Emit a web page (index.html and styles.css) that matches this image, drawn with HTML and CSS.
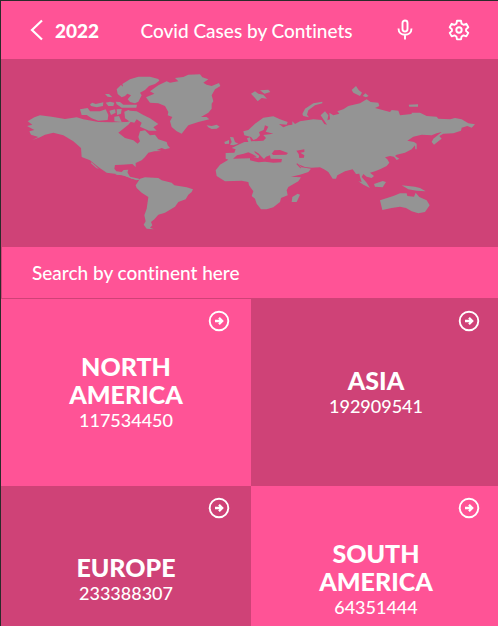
FILE: index.html
```html
<!DOCTYPE html>
<html lang="en">
<head>
<meta charset="utf-8">
<meta name="viewport" content="width=device-width, initial-scale=1">
<title>Covid Cases by Continets</title>
<link rel="stylesheet" href="styles.css">
</head>
<body>
<svg class="symbols" aria-hidden="true">
  <symbol id="arrow" viewBox="0 0 22 22">
    <circle cx="11" cy="11" r="9.3" fill="none" stroke="currentColor" stroke-width="1.9"/>
    <path d="M7 11h6.500M11 7.800l3.200 3.200-3.200 3.200" fill="none" stroke="currentColor" stroke-width="2.300"/>
  </symbol>
</svg>
<div class="app">
  <header class="bar">
    <a class="back" href="#" aria-label="Back">
      <svg width="14" height="22" viewBox="0 0 14 22"><path d="M13 1.500L3 11l10 9.500" fill="none" stroke="currentColor" stroke-width="2.200"/></svg>
      <span>2022</span>
    </a>
    <h1 class="title">Covid Cases by Continets</h1>
    <div class="actions">
      <button type="button" aria-label="Voice">
        <svg width="22" height="22" viewBox="0 0 22 22" fill="none" stroke="currentColor" stroke-width="1.900"><rect x="8.500" y="1.500" width="5" height="11" rx="2.500"/><path d="M4.500 9.500c0 8.400 13 8.400 13 0M11 15.800v4.700"/></svg>
      </button>
      <button type="button" aria-label="Settings">
        <svg width="22" height="22" viewBox="0 0 22 22" fill="none" stroke="currentColor" stroke-width="1.900" stroke-linejoin="round"><path d="M9 1.800h4l.6 2.900 1.900 1.100 2.800-1 2 3.500-2.200 1.900v1.800l2.200 1.900-2 3.500-2.800-1-1.900 1.100-.6 2.900H9l-.6-2.900-1.900-1.100-2.800 1-2-3.500 2.200-1.900v-1.800L1.700 8.300l2-3.500 2.800 1 1.900-1.100z"/><circle cx="11" cy="11" r="2.700"/></svg>
      </button>
    </div>
  </header>
  <main>
    <svg class="map" viewBox="3 177 1491 564" role="img" aria-label="World map">
      <g class="land">
        <g transform="translate(45 186)">
          <path d="M36 192L52 188 38 178 58 166 75 160 110 164 150 171 185 166 205 172 250 180 290 181 335 180 350 176 340 188 325 200 310 212 330 228 355 235 368 245 375 238 370 225 375 208 390 205 405 220 420 218 430 232 455 240 458 250 465 258 450 262 440 258 425 264 440 267 418 268 400 272 390 285 380 295 362 303 362 315 352 306 320 308 300 309 298 320 304 328 320 330 326 324 340 323 335 337 350 350 378 351 365 355 340 345 310 337 275 332 250 315 225 295 200 285 198 258 175 238 145 220 115 212 90 218 75 226 52 234 70 225 48 218 43 208 58 204Z"/>
          <path d="M230 301l22 20-8-3-17-15Z"/>
        </g>
        <g transform="translate(225 210)">
          <path d="M142 42L165 28 190 20 225 20 250 27 253 32 240 42 222 48 210 60 195 68 200 76 190 95 180 100 165 96 158 88 168 76 150 68ZM125 58L138 45 150 55 160 68 150 78 140 82 128 72ZM90 72h12l10 10-14-2ZM92 98l13-3 13 3-3 10h-15ZM45 103l7-5 10 4 23-5-1 11-19 4-17-4ZM122 95l13 1 10 8h41l-2 9h-44l-15-10Z"/>
          <path d="M15 118L38 114 45 124 75 124 92 118 100 135 98 150 70 152 50 145 35 135 20 135ZM103 122l17-4 2 10-14 7ZM125 118l15-1-2 14-12 4ZM118 140l14-2 8 18-22-2ZM165 122L185 124 205 135 225 145 250 162 235 172 245 182 222 182 195 170 200 158 185 148 178 158 165 155 150 145 148 125 160 120Z"/>
        </g>
        <g transform="translate(345 186)">
          <path d="M0 338L20 330 35 328 45 344 72 350 70 354 50 350 25 340Z"/>
          <path d="M62 370L75 350 90 346 130 348 140 355 170 362 178 370 215 376 234 382 230 390 220 398 212 412 190 420 180 434 160 446 150 452 130 458 118 472 108 480 112 490 105 497 117 502 95 500 86 488 92 478 88 460 95 440 100 405 80 392 65 378Z"/>
          <path d="M93 106L118 95 105 88 130 70 155 58 165 62 190 58 180 48 205 45 220 38 255 37 262 46 280 52 265 62 275 68 290 72 312 63 316 72 300 82 290 100 295 118 290 125 290 140 280 152 258 165 275 165 283 172 250 180 220 190 208 205 200 215 185 208 170 195 165 178 172 165 158 160 160 150 150 132 130 124 105 122Z"/>
          <path d="M275 190l15 2 15-4 9 6-9 6-15 1-10-5Z"/>
        </g>
        <g transform="translate(615 186)">
          <path d="M62 290V273L88 272 92 262 80 258 100 248 118 240 130 240 126 229 135 226 138 238 175 236 183 228 175 219 205 215 182 209 190 194 180 190 176 204 162 210 165 220 155 230 145 234 138 225 118 220 115 208 130 204 150 185 175 167 205 163 225 172 248 180 245 188 222 186 235 196 250 190 262 188 262 178 270 186 285 178 325 172 350 174 358 186 366 188 347 160 360 148 370 160 367 175 375 172 373 152 385 160 403 155 397 148 415 142 430 132 465 124 485 112 497 120 520 122 523 132 510 138 555 150 560 144 580 146 585 160 620 156 620 152 645 152 665 162 695 164 700 170 735 172 750 168 770 172 790 184 810 187 800 197 787 192 770 197 768 206 745 214 715 215 703 222 710 230 700 238 687 248 680 240 685 230 710 210 695 214 680 220 650 218 625 224 607 236 627 240 635 245V262H631L630 250 620 262 600 272 575 278 570 282 583 290 575 294 567 284 555 282 540 286 547 292 553 302 545 312 525 322 510 328 495 332 507 342 500 348 485 344 475 336 470 345 485 362 495 378 475 368 460 358 470 360 465 345 463 335 453 336 443 322 420 328 397 340 393 350 383 350 370 330 357 322 345 316 320 317 300 315 278 306 290 316 318 320 310 330 285 338 258 344 288 346 280 358 250 375 245 385 248 400 228 408 225 420 205 436 185 442 168 442 155 425 150 410 140 402 145 388 132 370 130 360 110 356 60 358 35 342 32 325 45 308 70 293Z"/>
          <path d="M75 225l10 1 5 14 10 5-15 5-10-2 5-8ZM58 240l14-6v11l-12 1ZM138 95l12-7 10 7 15 3 11 12-16-2-12 10-8-10ZM165 85l25-2 6 7-18 5ZM292 156l8-16 25-16 27-5v5l-22 6-20 15-4 13 6 8-17-4ZM262 405l16-10 7 3-10 22h-15Z"/>
          <path class="sea" d="M84 290L96 280 116 275 130 271 143 277 155 284 146 285 160 289 163 282 150 272 148 267 160 274 170 284 177 291 183 284 195 280 197 290 231 291 229 301 205 302 180 299 160 301 135 295V289ZM200 275l8-10 17-1 24 9-5 5-39 1ZM274 266l24-4v8l-12 2 12 8-1 7-14 1-2-12ZM274 306l3-2 12 14-3 1Z"/>
        </g>
        <g transform="translate(900 186)">
          <path d="M155 84l13-12 8 12 10 8-6 10-20-10ZM188 102l8-8 10 8-8 4ZM326 128l28-1v7h-26ZM222 366l26-9 10 3-10 16-23-2ZM305 370l40 4 15 4 17 10-27-2-25-4Z"/>
          <path d="M240 415L280 402 300 394 320 394 322 402 342 404 347 392 358 405 380 415 389 430 375 450 355 454 335 448 318 438 300 434 275 438 247 444Z"/>
        </g>
      </g>
    </svg>
    <form class="search">
      <input type="text" aria-label="Search by continent" placeholder="Search by continent here">
    </form>
    <section class="grid">
      <article class="card">
        <a class="more" href="#" aria-label="North America details"><svg width="22" height="22"><use href="#arrow"/></svg></a>
        <h2>NORTH AMERICA</h2><p>117534450</p>
      </article>
      <article class="card dark">
        <a class="more" href="#" aria-label="Asia details"><svg width="22" height="22"><use href="#arrow"/></svg></a>
        <h2>ASIA</h2><p>192909541</p>
      </article>
      <article class="card dark">
        <a class="more" href="#" aria-label="Europe details"><svg width="22" height="22"><use href="#arrow"/></svg></a>
        <h2>EUROPE</h2><p>233388307</p>
      </article>
      <article class="card">
        <a class="more" href="#" aria-label="South America details"><svg width="22" height="22"><use href="#arrow"/></svg></a>
        <h2>SOUTH AMERICA</h2><p>64351444</p>
      </article>
    </section>
  </main>
</div>
</body>
</html>
```
FILE: styles.css
```css
* { box-sizing: border-box; }
body {
  margin: 0;
  color: #fff;
  background: #cf4277;
  font-family: "Gill Sans", "Gill Sans MT", Lato, sans-serif;
  font-variant-ligatures: none;
}
h1, h2, p { margin: 0; }
a { color: inherit; text-decoration: none; }
.symbols { position: absolute; width: 0; height: 0; }
.app {
  height: 100vh;
  overflow: hidden;
  border-top: 1px solid #2b2b2b;
  border-left: 1px solid #2b2b2b;
}
.bar {
  display: flex;
  align-items: center;
  justify-content: space-between;
  height: 58px;
  padding: 0 28px;
  background: #ff5396;
}
.back {
  display: flex;
  align-items: center;
  gap: 12px;
  font-size: 19px;
  font-weight: 900;
}
.title { font-size: 19px; font-weight: 500; }
.actions { display: flex; gap: 32px; }
.actions button {
  display: flex;
  padding: 0;
  border: 0;
  color: inherit;
  background: none;
}
.map { display: block; width: 100%; height: auto; }
.land { fill: #949494; }
.sea { fill: #cf4277; }
.search { padding: 0 0 1px 1px; }
.search input {
  display: block;
  width: 100%;
  height: 51px;
  padding: 0 30px;
  border: 0;
  border-radius: 0;
  outline: 0;
  color: #fff;
  background: #ff5396;
  font: inherit;
  font-size: 19px;
  font-weight: 500;
}
.search input::placeholder { color: #fff; opacity: 1; }
.grid {
  display: grid;
  grid-template-columns: 1fr 1fr;
  grid-auto-rows: 187px;
  margin-right: -3px;
}
.card {
  position: relative;
  display: flex;
  flex-direction: column;
  align-items: center;
  justify-content: center;
  padding: 0 60px;
  text-align: center;
  background: #ff5396;
}
.card.dark { background: #cf4277; }
.card h2 { font-size: 25px; line-height: 28px; font-weight: 900; }
.card p { font-size: 18px; line-height: 25px; font-weight: 500; }
.more { position: absolute; top: 11px; right: 21px; display: flex; }
```
